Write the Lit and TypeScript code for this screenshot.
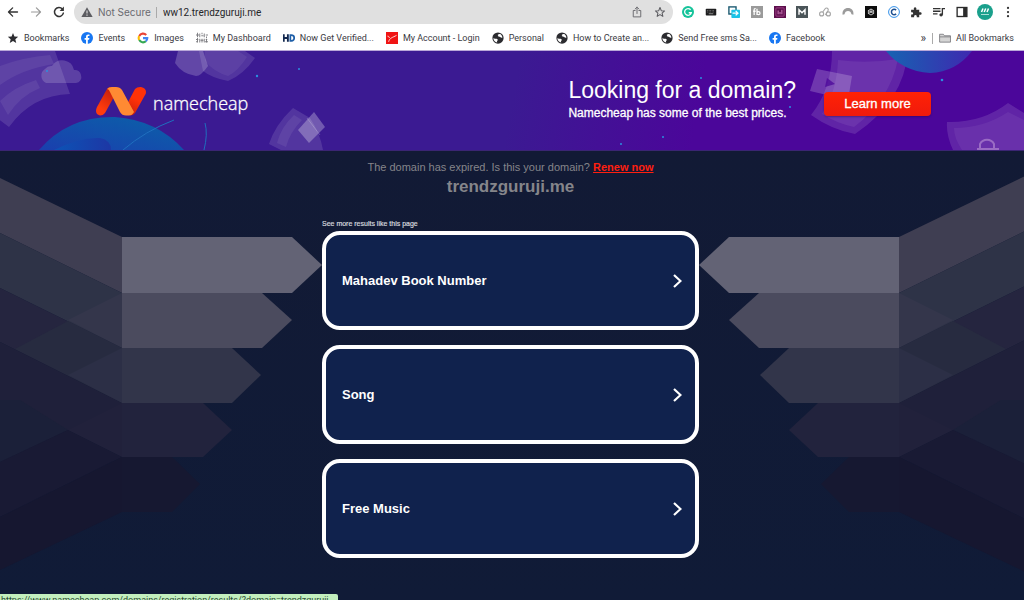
import { LitElement, html, svg, css, TemplateResult } from "lit";
import { customElement, property } from "lit/decorators.js";

const icon = (body: TemplateResult, box = 16, cls = "icon") =>
  html`<svg class=${cls} viewBox="0 0 ${box} ${box}" aria-hidden="true">${body}</svg>`;

const line = (d: string, color = "#333", width = 1.6) =>
  svg`<path d=${d} fill="none" stroke=${color} stroke-width=${width} stroke-linecap="round" stroke-linejoin="round"/>`;

const facebook = () => svg`
  <circle cx="8" cy="8" r="8" fill="#1877f2"/>
  <path d="M6.7 16V10.4H4.8V8h1.9V6.4c0-2 1.2-3.1 3-3.1.8 0 1.6.1 1.6.1v1.9h-1c-1 0-1.2.6-1.2 1.2V8h2.1l-.4 2.4H9.1V16z" fill="#fff"/>`;

const globe = () => svg`
  <circle cx="8" cy="8" r="7.500" fill="#2b2b2f"/>
  <path d="M1.800 7.600C2.200 8.600 3.600 9 5 9c1.600 0 2.600.4 2.600 1.500 0 1-1 1.200-1 2.200 0 .5.200.9.500 1.200C4 13.800 1.700 11.200 1.800 7.600z" fill="#fff"/>
  <path d="M7.800 3.800c.8-1 1.800-1.500 3-1.200 1.700.9 2.900 2.600 3.100 4.700-.9.700-1.900.4-2.600-.2-.7-.6-1.600-.3-2.300-.8-.6-.5-.3-1-.8-1.300-.5-.3-.7-.7-.4-1.200z" fill="#fff"/>`;

const marks: { label: string; art: () => TemplateResult }[] = [
  { label: "Bookmarks", art: () => svg`<path d="M8 1.200l1.900 4.700 5 .4-3.800 3.300 1.200 5L8 11.900l-4.300 2.700 1.200-5L1.100 6.300l5-.4z" fill="#2c2c30"/>` },
  { label: "Events", art: facebook },
  {
    label: "Images", art: () => svg`
      <g fill="none" stroke-width="2.800">
        <path d="M12.300 4A5.700 5.700 0 0 0 3 5.200" stroke="#ea4335"/>
        <path d="M3 5.200a5.700 5.700 0 0 0 0 5.600" stroke="#fbbc05"/>
        <path d="M3 10.800a5.700 5.700 0 0 0 8.800 1.500" stroke="#34a853"/>
        <path d="M11.800 12.300A5.700 5.700 0 0 0 13.700 8.200H8" stroke="#4285f4"/>
      </g>`,
  },
  {
    label: "My Dashboard", art: () => svg`
      <g fill="none" stroke="#77777c" stroke-width="1.200">
        <path d="M0 4h4M5 2v5M7 5h3M11 2v5M13 4h3M2 1v6M8 1v2M14 6v2"/>
        <path d="M0 10h3M2 8v6M5 9v5M6 11h4M8 9v5M11 9v5M13 10h2M14 9v5M0 13h2M12 13h4"/>
      </g>`,
  },
  {
    label: "Now Get Verified...", art: () => svg`
      <path d="M1 3v10M6.500 3v10M1 8h5.500" fill="none" stroke="#12284f" stroke-width="2.500"/>
      <path d="M9.800 4.100h1.400c5 0 5 7.800 0 7.800H9.800z" fill="none" stroke="#1f5fa8" stroke-width="2.300"/>`,
  },
  {
    label: "My Account - Login", art: () => svg`
      <rect width="16" height="16" fill="#f01414"/>
      <path d="M2 5.500c1.800 0 2 1 2.600 2.500M3.500 13c1.500-5.500 5.500-5.600 10.500-8.500" fill="none" stroke="#fff" stroke-width="1.100"/>`,
  },
  { label: "Personal", art: globe },
  { label: "How to Create an...", art: globe },
  { label: "Send Free sms Sa...", art: globe },
  { label: "Facebook", art: facebook },
];

const extensions: { label: string; art: TemplateResult }[] = [
  { label: "Grammar checker", art: svg`<circle cx="8" cy="8" r="8" fill="#15c39a"/><path d="M11.500 5A4.500 4.500 0 1 0 12.400 9H9" fill="none" stroke="#fff" stroke-width="1.700"/>` },
  { label: "Keyboard", art: svg`<rect x="1" y="3.500" width="14" height="9" rx="1" fill="#1d1d1f"/><path d="M3 6h10M3 8h10" stroke="#999" stroke-width=".9" stroke-dasharray="1 1"/><path d="M5 10.300h6" stroke="#aaa"/>` },
  { label: "Copy pages", art: svg`<rect x="1.200" y="1.200" width="9.500" height="9.500" fill="#fff" stroke="#16566e" stroke-width="1.800"/><rect x="4.500" y="5" width="11.500" height="11" rx="1" fill="#1cc3e6"/><path d="M6 9.500H13M10.200 6.500l3 3-3 3" fill="none" stroke="#fff" stroke-width="1.800"/>` },
  { label: "Keyword tool", art: svg`<rect width="16" height="16" fill="#9a9a9a"/><path d="M6.200 3.500c-1.700-.5-2 .7-2 2V12M2.800 7h3.400M8 3.500V12M8 9.500a2 2 0 1 1 4 0 2 2 0 1 1-4 0" fill="none" stroke="#fff" stroke-width="1.700"/>` },
  { label: "Image tool", art: svg`<rect width="16" height="16" fill="#5c0f4c"/><rect x="2.500" y="2.500" width="11" height="11" rx="1" fill="none" stroke="#b04f98"/><path d="M5.500 6v5M8 8v3M10.500 5v6" stroke="#d583c0" stroke-width="1.300"/>` },
  { label: "Metrics", art: svg`<rect width="16" height="16" fill="#4b5559"/><path d="M4 11.500V5l4 4 4-4v6.500" fill="none" stroke="#fff" stroke-width="1.900"/>` },
  { label: "Link rings", art: svg`<g fill="none" stroke="#a5a5a5" stroke-width="1.500"><circle cx="3.500" cy="10.500" r="2.700"/><circle cx="12.500" cy="10.500" r="2.700"/><path d="M5 8l3.200-4.300a2.300 2.300 0 0 1 3.900 2.400L8.500 12"/></g>` },
  { label: "VPN", art: svg`<path d="M.8 11.500C0 5.500 3.500 2.500 8 2.500s8 3 7.200 9l-2.600-.5C12 8.200 10.500 6.800 8 6.800S4 8.200 3.400 11z" fill="#9b9b9b"/>` },
  { label: "Assistant", art: svg`<rect width="16" height="16" fill="#0c0c0c"/><g fill="none" stroke="#ddd" stroke-width="1.100"><path d="M8 4l3.500 2v4L8 12l-3.500-2V6z"/><path d="M8 4v4l3.500 2M8 8l-3.500 2M4.500 6L8 8l3.500-2"/></g>` },
  { label: "Copyright check", art: svg`<circle cx="8" cy="8" r="7.200" fill="#fff" stroke="#2c8de8" stroke-width="1.300"/><path d="M10.800 5.500a3.600 3.600 0 1 0 0 5" fill="none" stroke="#1d4e8f" stroke-width="2"/>` },
  { label: "Extensions", art: svg`<path d="M1.500 5h3.800c-.6-2.200 0-3.500 1.500-3.500S8.900 2.800 8.300 5h4v3.400c2.100-.5 3.200.2 3.200 1.600s-1.100 2-3.200 1.500V15H9c.3-2-.4-3-1.700-3s-2 1-1.800 3H1.500v-3.600c1.800.3 2.700-.4 2.700-1.600s-.9-1.700-2.700-1.500z" fill="#333"/>` },
  { label: "Media", art: svg`<path d="M0 3.500h10M0 7h10M0 10.500h6" stroke="#333" stroke-width="1.700"/><path d="M12.500 11.500V3.500H16" fill="none" stroke="#333" stroke-width="1.800"/><circle cx="10.800" cy="11.800" r="2.300" fill="#333"/>` },
  { label: "Side panel", art: svg`<rect x="1.500" y="2" width="13" height="12" fill="#fff" stroke="#2b2b2b" stroke-width="1.800"/><path d="M9.500 2h5v12h-5z" fill="#2b2b2b"/>` },
];

/** One half of the arrow artwork that flanks the results; the right side is mirrored. */
const wing: [string, string][] = [
  ["#3f3e52", "-200,80 0,178 122,237 122,293 0,233 -200,135"],
  ["#2e3347", "-200,135 0,233 122,293 122,348 0,288 -200,190"],
  ["#34364b", "122,293 68,320 122,348"],
  ["#25253f", "-200,190 0,288 122,348 122,403 0,342 -200,244"],
  ["#272b40", "68,321 122,348 122,403 15,349"],
  ["#2c2f46", "122,348 68,375 122,403"],
  ["#1f203a", "-200,244 0,342 122,403 122,457 68,430 0,462 -200,560"],
  ["#1b2039", "-200,400 20,400 68,430 0,462 -200,560"],
  ["#21213b", "122,403 68,430 122,457"],
  ["#191a34", "68,430 122,457 0,517 -200,614 -200,560 0,462"],
  ["#161730", "122,457 122,512 0,570 -200,668 -200,614 0,517"],
  ["#636375", "122,237 292,237 322,265 292,293 122,293"],
  ["#4b4b5e", "122,293 262,293 292,320 262,348 122,348"],
  ["#32354a", "122,348 232,348 261,375 232,403 122,403"],
  ["#22233d", "122,403 203,403 232,430 203,457 122,457"],
  ["#161831", "122,457 172,457 200,484 172,512 122,512"],
];

@customElement("browser-bar")
class BrowserBar extends LitElement {
  static styles = css`
    :host { display: block; background: #fff; color: #3a3a3f; font-family: Roboto, Inter, sans-serif; font-size: 9px; }
    button { border: 0; background: none; padding: 0; margin: 0; display: grid; place-items: center; font: inherit; color: inherit; }
    .icon { width: 12px; height: 12px; display: block; flex: none; }
    .tools { display: flex; height: 24px; align-items: center; padding-right: 5px; }
    .nav { display: grid; grid-template-columns: repeat(3, 23px); padding: 0 4px 0 1px; }
    .address { flex: 1; min-width: 0; height: 24px; border-radius: 12px; background: #e0e0e0; display: flex; align-items: center; padding: 0 7px; gap: 5px; font-size: 10px; }
    .address .warn { width: 12px; height: 12px; }
    .safety { color: #6b6b70; font-family: Inter, sans-serif; white-space: nowrap; }
    .rule { width: 1px; height: 11px; background: #aaa; }
    .address input { flex: 1; min-width: 0; border: 0; background: none; outline: 0; padding: 0 1px; font: inherit; color: #26262a; }
    .actions { display: flex; gap: 11px; }
    .ext { display: grid; grid-template-columns: repeat(15, 1fr); flex: 0 0 342px; margin-left: 4px; }
    .avatar { width: 16px; height: 16px; display: block; }
    .marks { display: flex; height: 27px; box-sizing: border-box; align-items: center; padding: 2px 10px 0 7px; gap: 12px; white-space: nowrap; border-bottom: 1px solid #b9a8d8; }
    .mark { display: flex; align-items: center; gap: 5px; color: inherit; text-decoration: none; }
    .spring { flex: 1; }
    .tail { display: flex; align-items: center; gap: 6px; }
    .more { font-size: 12px; line-height: 12px; }
  `;

  render() {
    return html`
      <div class="tools">
        <div class="nav">
          <button aria-label="Back">${icon(line("M14 8H2.500M7.500 2.500L2 8l5.500 5.500", "#333", 1.8))}</button>
          <button aria-label="Forward">${icon(line("M2 8h11.500M8.500 2.500L14 8l-5.500 5.500", "#999", 1.6))}</button>
          <button aria-label="Reload">${icon(svg`${line("M13.800 9.500A6 6 0 1 1 12.500 4", "#333", 2)}<path d="M14.500 .8v6H8.800z" fill="#333"/>`)}</button>
        </div>
        <div class="address">
          <svg class="warn" viewBox="0 0 16 16" aria-hidden="true"><path d="M8 1.500L15.500 14.500H.5z" fill="#5b5b60"/><path d="M8 6v4M8 11.300v1.600" stroke="#e0e0e0" stroke-width="1.500"/></svg>
          <span class="safety">Not Secure</span>
          <span class="rule"></span>
          <input aria-label="Address" value="ww12.trendzguruji.me" />
          <div class="actions">
            <button aria-label="Share">${icon(line("M5.500 6H3v8.500h10V6h-2.500M8 10V1.500M5.500 4L8 1.500 10.500 4", "#6b6b70", 1.3))}</button>
            <button aria-label="Bookmark this page">${icon(line("M8 2l1.700 4.200 4.400.4-3.300 2.900 1 4.300L8 11.500l-3.800 2.300 1-4.300-3.300-2.900 4.400-.4z", "#5b5b60", 1.4))}</button>
          </div>
        </div>
        <div class="ext">
          ${extensions.map((e) => html`<button aria-label=${e.label}>${icon(e.art)}</button>`)}
          <button aria-label="Profile">
            ${icon(svg`<circle cx="8" cy="8" r="8" fill="#1aa08c"/><path d="M4.500 8L6 4.500M7.200 8l1.500-3.500M10 8l1.500-3.500" stroke="#fff" stroke-width="1.500"/><path d="M4 10.500h8" stroke="#a8ded5"/>`, 16, "avatar")}
          </button>
          <button aria-label="Menu">${icon(svg`<g fill="#333"><circle cx="8" cy="2.500" r="1.500"/><circle cx="8" cy="8" r="1.500"/><circle cx="8" cy="13.500" r="1.500"/></g>`)}</button>
        </div>
      </div>
      <nav class="marks" aria-label="Bookmarks bar">
        ${marks.map((m) => html`<a class="mark" href="#">${icon(m.art())}<span>${m.label}</span></a>`)}
        <span class="spring"></span>
        <div class="tail">
          <button class="more" aria-label="More bookmarks">»</button>
          <span class="rule"></span>
          <a class="mark" href="#">${icon(svg`<path d="M.8 3h5l1.500 2h8v8.500H.8zM.8 6.500h14.500" fill="#d5d5d5" stroke="#77777c" stroke-width="1.100"/>`)}<span>All Bookmarks</span></a>
        </div>
      </nav>
    `;
  }
}

@customElement("promo-banner")
class PromoBanner extends LitElement {
  static styles = css`
    :host { display: block; position: relative; overflow: hidden; font-family: "Liberation Sans", Arial, sans-serif; color: #fff; background: linear-gradient(100deg, #3b1a92 0 50%, #4b069a 68%); border-bottom: 1px solid #3b2573; }
    .art { position: absolute; inset: 0; width: 100%; height: 100%; }
    .row { position: relative; display: flex; align-items: center; height: 99px; max-width: 836px; margin: 0 auto; padding: 0 14px 0 16px; justify-content: space-between; }
    .logo { display: flex; align-items: center; gap: 6px; color: inherit; text-decoration: none; }
    .mark { width: 52px; height: 30px; display: block; }
    .name { font: 300 18px/30px "Open Sans", sans-serif; padding-top: 4px; -webkit-text-stroke: 0.3px #fff; }
    .pitch { display: flex; align-items: center; gap: 28px; padding-top: 2px; }
    h2 { margin: 0; font-size: 23px; line-height: 26px; font-weight: 400; }
    p { margin: 0; font-size: 12px; line-height: 20px; -webkit-text-stroke: 0.3px #fff; }
    .copy { padding-bottom: 4px; white-space: nowrap; }
    button { border: 0; border-radius: 4px; width: 107px; height: 24px; margin-top: 4px; padding: 0; background: linear-gradient(#ff2205, #f01a0c); color: #fff; font: 13px/24px "Liberation Sans", Arial, sans-serif; white-space: nowrap; box-shadow: 0 1px 2px rgba(40, 0, 60, 0.4); -webkit-text-stroke: 0.3px #fff; }
  `;

  render() {
    return html`
      <svg class="art" viewBox="0 0 1024 99" preserveAspectRatio="xMidYMid slice" aria-hidden="true">
        <defs>
          <linearGradient id="planet" x1="0" y1="1" x2="1" y2="0"><stop offset="0" stop-color="#1a3fae"/><stop offset="1" stop-color="#0a62a8"/></linearGradient>
          <linearGradient id="moon"><stop offset="0" stop-color="#1763b2"/><stop offset="1" stop-color="#3e29b0"/></linearGradient>
          <linearGradient id="swell" x1="0" x2="1"><stop offset="0" stop-color="#0c53b5"/><stop offset="1" stop-color="#1d37a5"/></linearGradient>
        </defs>
        <g fill="#fff" fill-opacity=".12">
          <path d="M-10 0H55L70 43Q32 44 9 76L-10 62z"/>
          <path d="M0 15Q24 6 50 4L54 13Q22 18 0 34zM0 50Q14 36 36 29L40 37Q20 45 8 64z" fill-opacity=".07"/>
          <path d="M46 32a8 8 0 0 1-1-14 8 8 0 0 1 7-3 12 12 0 0 1 22 4 6 6 0 0 1 7 5 6 6 0 0 1-5 8z" fill-opacity=".17"/>
          <path d="M199 0H245L255 7Q243 24 228 30Q212 27 203 20z"/>
          <path d="M205 0H238L247 6Q238 20 228 25Q214 21 205 10z" fill-opacity=".06"/>
          <path d="M178 0H203L208 15Q201 25 196 25Q182 23 175 12z" fill-opacity=".2"/>
          <path d="M293 57L310 67Q320 82 323 99H281L269 93Q275 74 293 57z"/>
          <path d="M294 64l8 5q-12 12-16 27l-9-4q4-16 17-28z" fill-opacity=".07"/>
          <path d="M314 61L325 76 309 92 298 79z" fill-opacity=".28"/>
          <path d="M307 67L320 84" stroke="#fff" stroke-opacity=".2"/>
          <path d="M832 0H908Q904 50 855 83Q832 79 811 64Q832 38 832 0z"/>
          <path d="M838 9Q867 13 898 8Q890 49 854 76Q836 72 822 63Q837 40 838 9z" fill-opacity=".07"/>
          <path d="M817 18L852 25 848 49 810 40z" fill-opacity=".2"/>
          <path d="M1008 52L1024 62V99H953Q946 84 947 71Q982 72 1008 52z"/>
          <path d="M1008 61L1024 69V99H962Q954 87 954 77Q984 77 1008 61z" fill-opacity=".06"/>
        </g>
        <path d="M827 27L835 33 825 36z" fill="#4b069a" fill-opacity=".75"/>
        <path d="M980 98V93a8 8 0 0 1 14 0v5M977 98h22" fill="none" stroke="#9a6bc4" stroke-width="2"/>
        <path d="M39 99Q68 65 115 66Q157 69 184 99z" fill="url(#planet)"/>
        <path d="M54 99Q80 86 100 87Q111 89 111 99z" fill="url(#swell)"/>
        <path d="M123 99Q145 80 174 69M205 72Q208 83 204 99" fill="none" stroke="#1f6fbe"/>
        <path d="M886 0h86Q956 21 930 22Q902 20 886 0z" fill="url(#moon)"/>
        <g fill="#2a8fe0"><circle cx="47" cy="20" r="1"/><circle cx="257" cy="25" r="1.200"/><circle cx="299" cy="18" r="1"/><circle cx="701" cy="27" r="1"/><circle cx="790" cy="56" r="1"/><circle cx="942" cy="29" r="1.300"/><circle cx="621" cy="93" r="1"/><circle cx="663" cy="86" r="1"/></g>
      </svg>
      <div class="row">
        <a class="logo" href="#">
          <svg class="mark" viewBox="0 0 52 30" aria-hidden="true">
            <defs>
              <linearGradient id="left" x1="0" y1="1" x2="0.500" y2="0"><stop offset=".3" stop-color="#ff3c0c"/><stop offset="1" stop-color="#c9200c"/></linearGradient>
              <linearGradient id="right" x1="0.200" y1="1" x2="0.600" y2="0"><stop offset="0" stop-color="#c9200c"/><stop offset=".6" stop-color="#ff3208"/></linearGradient>
            </defs>
            <path d="M12 3Q14 .5 17 1L20 9 10 27Q8 29.500 5 29.500Q1 28.500 1 25Q1 23 2 21z" fill="url(#left)"/>
            <path d="M40 3Q42 .8 46 1Q51 2 51 6Q51 8 50 9L40 27Q38 29.500 35 29.500L31 20z" fill="url(#right)"/>
            <path d="M12 3Q13.500 1 17 1H21Q25 1 27 4L39 26Q37 29.500 34 29.500H31Q27 29.500 25 26L15 6Q14 3 12 3z" fill="#ff8a33"/>
          </svg>
          <span class="name">namecheap</span>
        </a>
        <div class="pitch">
          <div class="copy">
            <h2>Looking for a domain?</h2>
            <p>Namecheap has some of the best prices.</p>
          </div>
          <button>Learn more</button>
        </div>
      </div>
    `;
  }
}

@customElement("related-link")
class RelatedLink extends LitElement {
  @property() label = "";

  static styles = css`
    :host { display: block; }
    a { display: flex; align-items: center; justify-content: space-between; box-sizing: border-box; height: 99px; padding: 0 13px 0 16px; border: 4px solid #fff; border-radius: 18px; background: #10224d; color: #fff; font-size: 13px; font-weight: 700; text-decoration: none; }
    svg { width: 9px; height: 14px; display: block; }
  `;

  render() {
    return html`<a href="#">${this.label}<svg viewBox="0 0 9 14" aria-hidden="true"><path d="M1 1L7.500 7 1 13" fill="none" stroke="#fff" stroke-width="2.200"/></svg></a>`;
  }
}

@customElement("app-root")
class AppRoot extends LitElement {
  static styles = css`
    :host { display: flex; flex-direction: column; min-height: 100vh; font-family: "Liberation Sans", Arial, sans-serif; background: #111a35; }
    main { flex: 1; display: grid; grid-template-columns: 1fr minmax(0, 378px) 1fr; overflow: hidden; padding-right: 3px; background: linear-gradient(#121a35, #101b37); }
    .wing { width: 322px; height: 449px; overflow: visible; justify-self: end; }
    .mirror { justify-self: start; transform: scaleX(-1); }
    .column { padding: 7px 0 24px; }
    .notice { margin: 0; font-size: 11px; line-height: 18px; text-align: center; color: #85858a; white-space: nowrap; }
    .notice a { color: #ff1f10; font-weight: 700; }
    h1 { margin: 0 0 21px; font-size: 17px; line-height: 22px; text-align: center; color: #85858a; }
    .hint { margin: 0 0 3px; font-size: 7px; line-height: 9px; color: #d4d6dd; -webkit-text-stroke: 0.2px #d4d6dd; }
    .list { display: grid; gap: 15px; }
    .status { position: fixed; left: 0; bottom: 0; width: 338px; height: 6px; overflow: hidden; box-sizing: border-box; padding: 0 1px; border-top-right-radius: 2px; background: #c2efbe; color: #2c4a33; font: 9px/12px Roboto, sans-serif; white-space: nowrap; }
  `;

  private wingArt(cls: string) {
    return html`<svg class=${cls} viewBox="0 151 322 449" aria-hidden="true">
      ${wing.map(([fill, points]) => svg`<polygon fill=${fill} points=${points}/>`)}
    </svg>`;
  }

  render() {
    return html`
      <browser-bar></browser-bar>
      <promo-banner></promo-banner>
      <main>
        ${this.wingArt("wing")}
        <div class="column">
          <p class="notice">The domain has expired. Is this your domain? <a href="#">Renew now</a></p>
          <h1>trendzguruji.me</h1>
          <p class="hint">See more results like this page</p>
          <div class="list">
            ${["Mahadev Book Number", "Song", "Free Music"].map((t) => html`<related-link label=${t}></related-link>`)}
          </div>
        </div>
        ${this.wingArt("wing mirror")}
      </main>
      <div class="status">https://www.namecheap.com/domains/registration/results/?domain=trendzguruji</div>
    `;
  }
}
